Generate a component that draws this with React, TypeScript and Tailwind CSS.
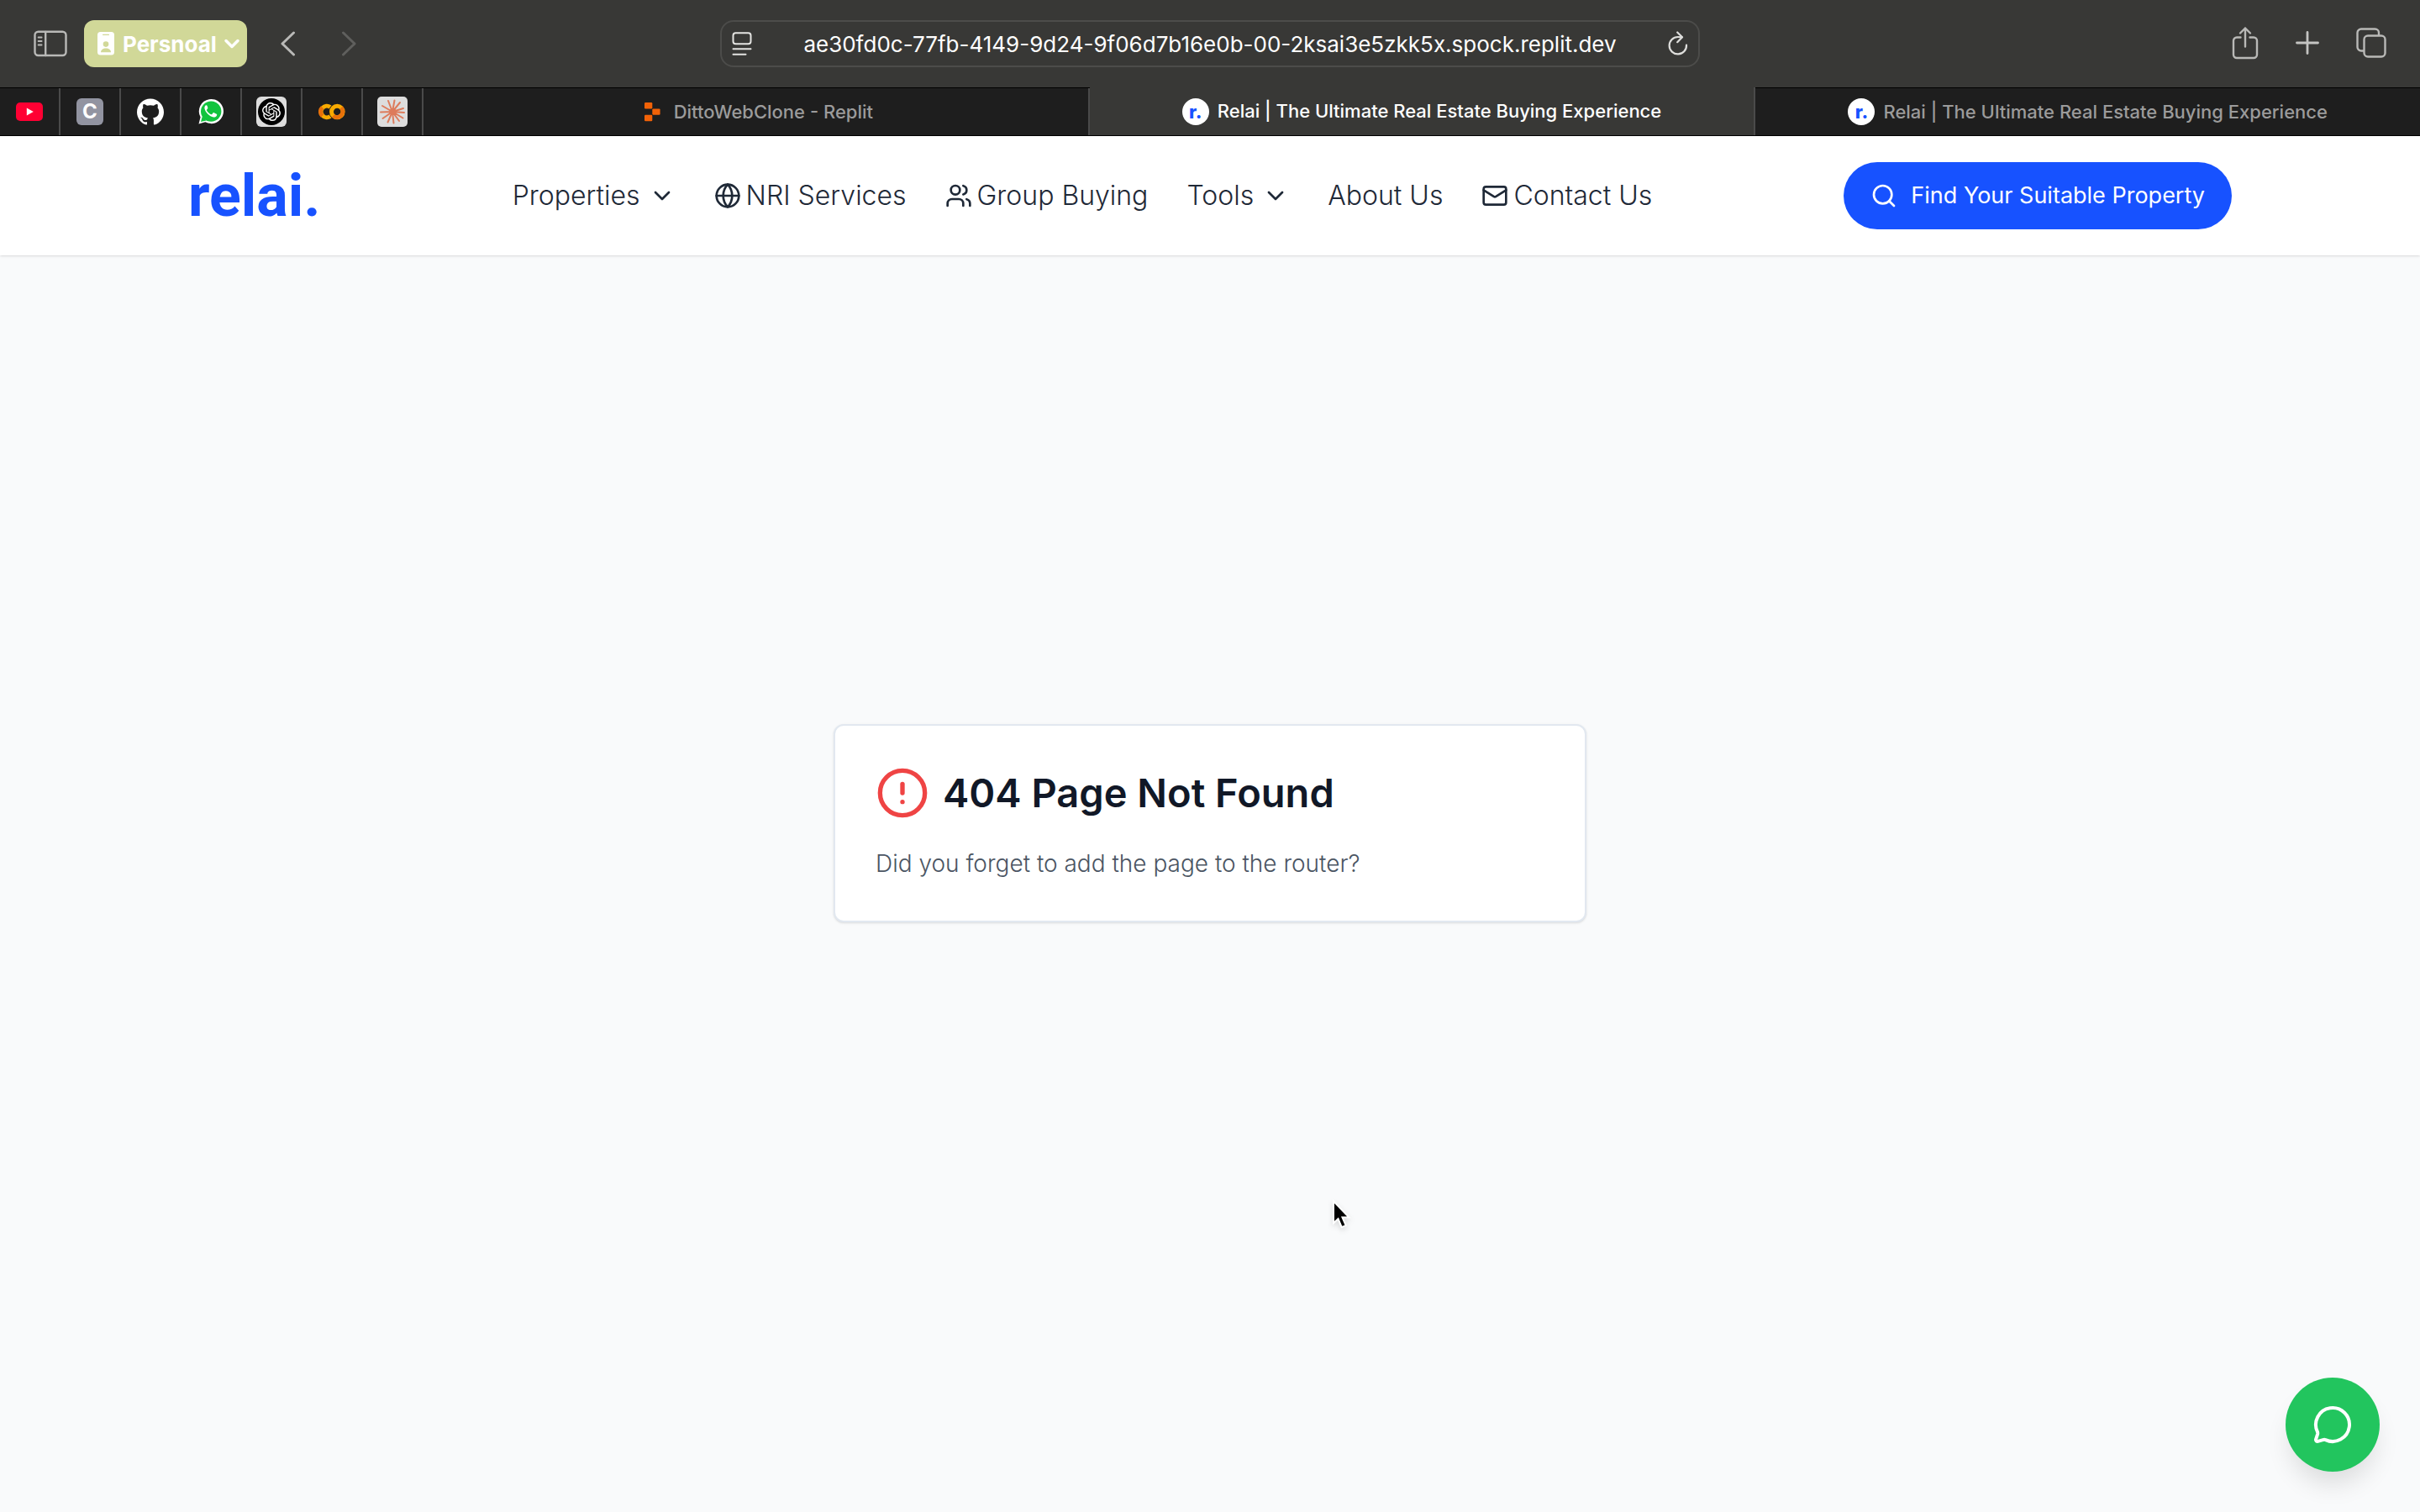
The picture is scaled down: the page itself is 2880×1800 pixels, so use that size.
import type { ReactNode } from "react";
import {
  ChevronDown,
  CircleAlert,
  Globe,
  Mail,
  MessageCircle,
  Search,
  Users,
} from "lucide-react";
import { SiGithub, SiOpenai } from "react-icons/si";

const PAGE_TITLE = "Relai | The Ultimate Real Estate Buying Experience";

function SidebarIcon() {
  return (
    <svg viewBox="0 0 40 32" className="h-8 w-10" fill="none" stroke="#b9b9b7" strokeWidth="2.4" strokeLinecap="round">
      <rect x="1.5" y="1.7" width="37" height="28.3" rx="4" />
      <path d="M14.2 2v28" />
      <path d="M5.6 8.5h4M5.6 13h4M5.6 17.5h4" strokeWidth="1.8" />
    </svg>
  );
}

function BadgeIcon() {
  return (
    <svg viewBox="0 0 20 28" className="h-7 w-5">
      <rect width="20" height="27.5" rx="3.5" fill="#fff" />
      <rect x="6" y="2.8" width="8" height="1.2" rx=".6" fill="#d1d898" />
      <circle cx="10" cy="14.6" r="3.3" fill="#d1d898" />
      <path d="M4 24.2c0-3 2.6-4.7 6-4.7s6 1.7 6 4.7z" fill="#d1d898" />
    </svg>
  );
}

function Chevron({ left = false }: { left?: boolean }) {
  return (
    <svg viewBox="0 0 18 30" className="h-[30px] w-[18px]" fill="none" stroke="currentColor" strokeWidth="3" strokeLinecap="round" strokeLinejoin="round">
      <path d={left ? "M15.5 2 2 15l13.5 13" : "M2.5 2 16 15 2.5 28"} />
    </svg>
  );
}

function ReaderIcon() {
  return (
    <svg viewBox="0 0 24 28" className="h-7 w-6" fill="none" stroke="#e4e4e2" strokeWidth="2" strokeLinecap="round">
      <rect x="1.5" y="1.2" width="21" height="13" rx="3" />
      <path d="M1.5 20.3h21M1.5 26.8h15" />
    </svg>
  );
}

function ReloadIcon() {
  return (
    <svg viewBox="0 0 24 30" className="h-[30px] w-6" fill="none" stroke="#dededc" strokeWidth="2.2" strokeLinecap="round" strokeLinejoin="round">
      <path d="M22 16.5A10.2 10.2 0 1 1 12 7l4.6.3" />
      <path d="M11.2 1.5 17 7.3l-5.8 5.9" />
    </svg>
  );
}

function ShareIcon() {
  return (
    <svg viewBox="0 0 32 40" className="h-10 w-8" fill="none" stroke="#b9b9b7" strokeWidth="2.4" strokeLinecap="round" strokeLinejoin="round">
      <path d="M10.5 13.5H6a4 4 0 0 0-4 4V34a4 4 0 0 0 4 4h20a4 4 0 0 0 4-4V17.5a4 4 0 0 0-4-4h-4.5" />
      <path d="M16 24.5V2.5M10 8.500l6-6 6 6" />
    </svg>
  );
}

function PlusIcon() {
  return (
    <svg viewBox="0 0 28 28" className="size-7" stroke="#c4c4c2" strokeWidth="2.8" strokeLinecap="round">
      <path d="M14 1.5v25M1.5 14h25" />
    </svg>
  );
}

function TabsIcon() {
  return (
    <svg viewBox="0 0 36 36" className="size-9" fill="none" stroke="#b9b9b7" strokeWidth="2.4">
      <rect x="9.5" y="9.5" width="25" height="25" rx="4.5" />
      <path d="M9.5 27.5H6A4.5 4.5 0 0 1 1.500 23V6A4.500 4.500 0 0 1 6 1.500h16.500A4.500 4.500 0 0 1 27 6v3.500" />
    </svg>
  );
}

function ColabIcon() {
  return (
    <svg viewBox="0 0 32 20" className="h-5 w-8" fill="none" strokeWidth="5">
      <path d="M14 4.500A6.800 6.800 0 1 0 14 15.500" stroke="#f9ab00" />
      <path d="M4.600 5A6.800 6.800 0 0 0 4.600 15" stroke="#e8710a" />
      <circle cx="22.300" cy="10" r="6.800" stroke="#f9ab00" />
      <path d="M27.100 5.200A6.800 6.800 0 0 1 17.500 14.800" stroke="#e8710a" />
    </svg>
  );
}

function BurstIcon() {
  return (
    <svg viewBox="0 0 36 36" className="size-9">
      <rect width="36" height="36" rx="5" fill="#dddddd" />
      <path
        d="M18 18 20.500 4.500M18 18 27 7M18 18 31 14M18 18 32 19M18 18 30.500 25.500M18 18 26 29M18 18 19.500 31.500M18 18 12.500 30.500M18 18 6.500 26M18 18 4 18.500M18 18 6 11M18 18 13 5"
        stroke="#dd7b5b"
        strokeWidth="2"
        strokeLinecap="round"
      />
      <circle cx="18.500" cy="18" r="4" fill="#dd7b5b" />
    </svg>
  );
}

function ReplitIcon() {
  return (
    <svg viewBox="0 0 32 32" className="size-8" fill="#f26207">
      <rect x="7" y="5" width="9.300" height="7.400" rx="1.200" />
      <rect x="16.300" y="12.400" width="9.300" height="7.400" rx="1.200" />
      <rect x="7" y="19.800" width="9.300" height="7.400" rx="1.200" />
    </svg>
  );
}

function RelaiFavicon() {
  return (
    <span className="flex size-8 items-center justify-center rounded-full bg-white text-[22px] leading-none font-extrabold text-[#1752ff]">
      r.
    </span>
  );
}

function PinnedTab({ label, children }: { label: string; children: ReactNode }) {
  return (
    <button aria-label={label} className="flex w-[72px] shrink-0 items-center justify-center border-r-2 border-[#4a4a4a]">
      {children}
    </button>
  );
}

function Tab({ icon, title, active = false }: { icon: ReactNode; title: string; active?: boolean }) {
  return (
    <button
      className={
        active
          ? "-mt-px flex flex-1 items-center justify-center gap-[10px] border-r-2 border-[#4a4a4a] bg-[#383836] text-white"
          : "flex flex-1 items-center justify-center gap-[10px] border-r-2 border-[#4a4a4a] text-[#9b9b9b] last:border-r-0"
      }
    >
      {icon}
      <span className="text-[22px] font-medium whitespace-nowrap">{title}</span>
    </button>
  );
}

function BrowserChrome() {
  return (
    <div>
      <div className="grid h-[104px] grid-cols-[1fr_minmax(0,1166px)_1fr] items-center bg-[#383836] px-10">
        <div className="flex items-center">
          <button aria-label="Show sidebar">
            <SidebarIcon />
          </button>
          <button className="ml-5 flex h-14 items-center rounded-xl bg-[#d1d898] pr-1 pl-4 text-[26px] font-bold text-white">
            <BadgeIcon />
            <span className="ml-[10px]">Persnoal</span>
            <ChevronDown className="ml-1 size-7" strokeWidth={3} />
          </button>
          <button aria-label="Back" className="ml-10 text-[#b9b9b7]">
            <Chevron left />
          </button>
          <button aria-label="Forward" className="ml-[54px] text-[#5f5f5d]">
            <Chevron />
          </button>
        </div>
        <div className="flex h-14 items-center rounded-2xl border-2 border-[#4c4c4a] px-3">
          <ReaderIcon />
          <input
            aria-label="Address"
            readOnly
            defaultValue="ae30fd0c-77fb-4149-9d24-9f06d7b16e0b-00-2ksai3e5zkk5x.spock.replit.dev"
            className="min-w-0 flex-1 bg-transparent text-center text-[26px] text-white outline-none"
          />
          <button aria-label="Reload">
            <ReloadIcon />
          </button>
        </div>
        <div className="flex items-center justify-end gap-11 pb-[2px]">
          <button aria-label="Share">
            <ShareIcon />
          </button>
          <button aria-label="New tab">
            <PlusIcon />
          </button>
          <button aria-label="Tab overview">
            <TabsIcon />
          </button>
        </div>
      </div>
      <div className="flex h-[58px] border-y border-black bg-[#1e1e1e]">
        <PinnedTab label="YouTube">
          <svg viewBox="0 0 32 22" className="h-[22px] w-8">
            <rect width="32" height="22" rx="5" fill="#ff0033" />
            <path d="M12.800 6.500v9l8-4.500z" fill="#fff" />
          </svg>
        </PinnedTab>
        <PinnedTab label="C">
          <span className="flex size-8 items-center justify-center rounded-md bg-[#9294a1] text-2xl leading-none font-bold text-white">
            C
          </span>
        </PinnedTab>
        <PinnedTab label="GitHub">
          <SiGithub className="size-8 text-white" />
        </PinnedTab>
        <PinnedTab label="WhatsApp">
          <svg viewBox="0 0 32 32" className="size-8">
            <path d="M1.500 30.500 3.600 22.600A14.600 14.600 0 1 1 9.300 28.300z" fill="#fff" />
            <circle cx="16.200" cy="15.600" r="12.200" fill="#12c43e" />
            <path d="M4 28l1.800-6.500 4.800 4.900z" fill="#12c43e" />
            <path d="M11.600 8.900c-.5-.9-1.300-.8-1.900-.3-1 .9-1.500 2.200-1.200 3.600 1 4.700 5.700 9.300 10.600 10.300 1.700.2 3.500-.8 4-2.300.2-.8.1-1.200-.4-1.500l-3-1.500c-.5-.2-.8-.1-1.200.3l-1.200 1.500c-.3.3-.6.3-1 .2-2.300-1-4.100-2.600-5.300-4.800-.2-.4-.1-.7.2-1l1-1.300c.2-.4.2-.7 0-1.100z" fill="#fff" />
          </svg>
        </PinnedTab>
        <PinnedTab label="ChatGPT">
          <span className="flex size-9 items-center justify-center rounded-md bg-[#dddddd]">
            <span className="flex size-8 items-center justify-center rounded-full bg-black text-white">
              <SiOpenai className="size-[22px]" />
            </span>
          </span>
        </PinnedTab>
        <PinnedTab label="Colab">
          <ColabIcon />
        </PinnedTab>
        <PinnedTab label="Claude">
          <BurstIcon />
        </PinnedTab>
        <Tab icon={<ReplitIcon />} title="DittoWebClone - Replit" />
        <Tab icon={<RelaiFavicon />} title={PAGE_TITLE} active />
        <Tab icon={<RelaiFavicon />} title={PAGE_TITLE} />
      </div>
    </div>
  );
}

function NavItem({ icon, label, menu = false }: { icon?: ReactNode; label: string; menu?: boolean }) {
  if (menu) {
    return (
      <button className="flex items-center gap-[10px] whitespace-nowrap">
        {label}
        <ChevronDown className="size-8" />
      </button>
    );
  }
  return (
    <a href="#" className="flex items-center gap-[6px] whitespace-nowrap">
      {icon}
      {label}
    </a>
  );
}

function SiteHeader() {
  return (
    <header className="flex h-[142px] items-center justify-between bg-white px-56 shadow-sm">
      <a href="#" className="font-['Roboto',sans-serif] text-[70px] leading-none font-bold text-[#1752ff]">
        relai.
      </a>
      <nav className="flex items-center gap-[46px] text-[32px] font-light text-[#1f2937]">
        <NavItem label="Properties" menu />
        <NavItem icon={<Globe className="size-8" />} label="NRI Services" />
        <NavItem icon={<Users className="size-8" />} label="Group Buying" />
        <NavItem label="Tools" menu />
        <NavItem label="About Us" />
        <NavItem icon={<Mail className="size-8" />} label="Contact Us" />
      </nav>
      <button className="flex h-20 items-center gap-4 rounded-full bg-[#1752ff] px-8 text-[27px] whitespace-nowrap text-white">
        <Search className="size-8" />
        Find Your Suitable Property
      </button>
    </header>
  );
}

export default function App() {
  return (
    <div className="flex min-h-screen flex-col bg-[#f9fafb] font-['Inter',sans-serif]">
      <BrowserChrome />
      <SiteHeader />
      <main className="flex flex-1 items-center justify-center pb-36">
        <section className="w-full max-w-4xl rounded-xl border-2 border-[#e2e8f0] bg-white p-12 shadow-sm">
          <div className="flex items-center gap-4">
            <CircleAlert className="size-16 text-[#ef4444]" />
            <h1 className="text-[47px] leading-[64px] font-semibold text-[#111827]">404 Page Not Found</h1>
          </div>
          <p className="mt-8 text-[28px] leading-10 font-light text-[#4b5563]">
            Did you forget to add the page to the router?
          </p>
        </section>
      </main>
      <button
        aria-label="Chat with us"
        className="fixed right-12 bottom-12 flex size-28 items-center justify-center rounded-full bg-[#22c55e] text-white shadow-[0_20px_30px_-6px_rgba(0,0,0,0.12)]"
      >
        <MessageCircle className="size-12" />
      </button>
      <svg viewBox="0 0 24 36" className="pointer-events-none fixed top-[1428px] left-[1585px] h-9 w-6 drop-shadow-md">
        <path d="M2 2v26l5.500-5 4.200 10 5-2.200-4.200-9.500h8z" fill="#000" stroke="#fff" strokeWidth="2" />
      </svg>
    </div>
  );
}
